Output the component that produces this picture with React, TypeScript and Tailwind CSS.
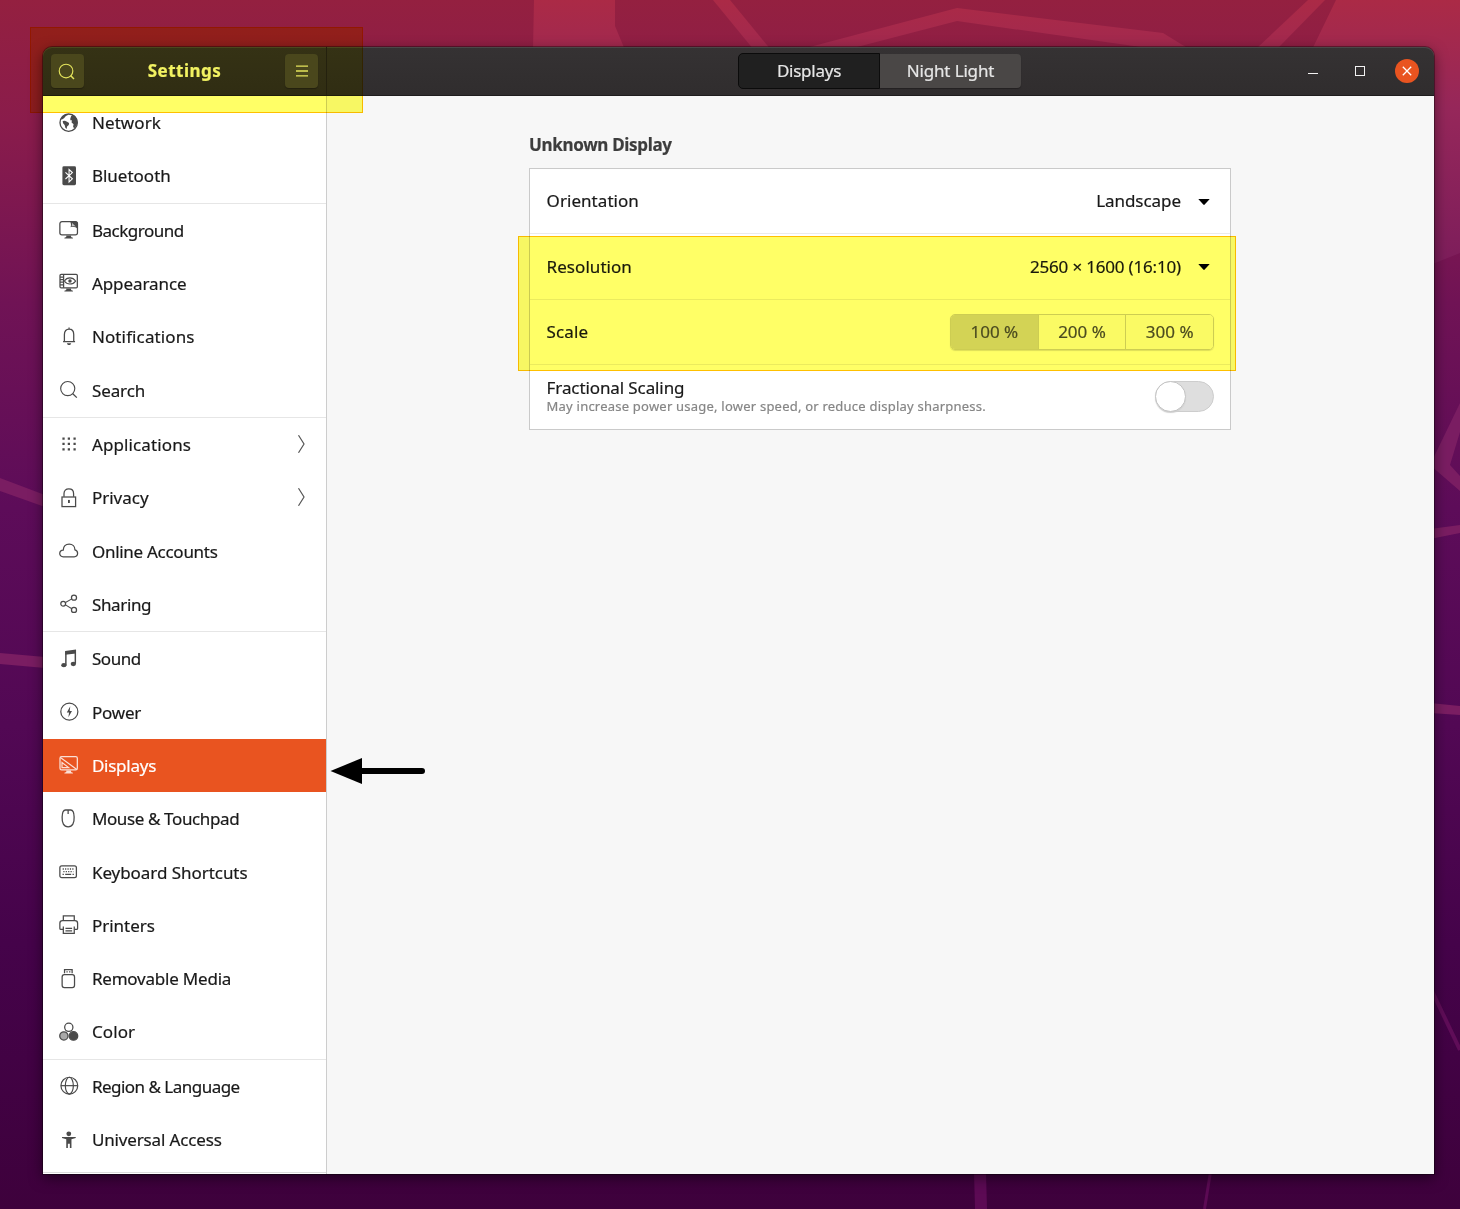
import type { ReactNode } from "react";

type Item = {
  label: string;
  icon: ReactNode;
  tracking: string;
  arrow?: boolean;
  selected?: boolean;
};

function Icon({ children }: { children: ReactNode }) {
  return (
    <svg
      viewBox="0 0 16 16"
      className="mb-[1px] h-[21.33px] w-[21.33px] shrink-0"
      fill="none"
      stroke="currentColor"
      strokeWidth="0.95"
    >
      {children}
    </svg>
  );
}

const stand = <path d="M6.2 12.4h3.6v1.1l1.4.6v.6H4.8v-.6l1.4-.6z" fill="currentColor" stroke="none" />;

const icons = {
  network: (
    <Icon>
      <circle cx="8" cy="8" r="6.5" strokeWidth="1" />
      <g fill="currentColor" stroke="none">
        <path d="M2.2 4.8C3.3 2.8 5.200 1.600 7.300 1.500l.6.600-2 .9-1.400 1.600-1.800 1.300z" />
        <path d="M3.500 6.700l1.700-.2 1.600.9 1.500.9-.2 1.500-1.300 1.100-.3 1.800-1-.8-.5-2.100-1.200-1.300z" />
        <path d="M9.200 5l.6-1.900 1.200-1.200c2.100 1 3.500 3.100 3.600 5.500-.1 2-1 3.700-2.500 4.900l-.8-1.500.4-1.700-1.500-1.300.2-1.600-1.100-.1z" />
      </g>
    </Icon>
  ),
  bluetooth: (
    <Icon>
      <rect x="3.3" y="1" width="10.2" height="14.2" rx="1.1" fill="currentColor" stroke="none" />
      <path d="M5.6 5.5l5.2 4.9-2.5 2.3V3.4l2.5 2.3-5.2 4.8" stroke="white" strokeWidth="0.8" />
    </Icon>
  ),
  background: (
    <Icon>
      <rect x="1.4" y="2" width="13.2" height="9.9" rx="1.6" />
      {stand}
      <path d="M9 1.600h4c1.100 0 2 .9 2 2v4.100C13.300 6 11.600 5.600 9.400 6.100 10 4.700 9.800 3.200 9 1.600z" fill="currentColor" stroke="none" />
      <path d="M10.200 5.300c.4-.9.400-1.700.2-2.500L13.300 5.700c-1-.4-2-.6-3.100-.4z" fill="white" fillOpacity="0.650" stroke="none" />
    </Icon>
  ),
  appearance: (
    <Icon>
      <rect x="1.5" y="1.7" width="13" height="10.2" rx="0.9" />
      <path d="M4.2 1.7v10.2M1.5 3.8h2.7M1.5 5.7h2.7M1.5 7.6h2.7M1.5 9.6h2.7" />
      {stand}
      <path d="M4.8 6.8C6.8 3.6 11 3.6 13.2 6.8 11 9.8 6.8 9.8 4.8 6.8z" strokeWidth="0.8" />
      <circle cx="9" cy="6.7" r="1.300" fill="currentColor" stroke="none" />
    </Icon>
  ),
  notifications: (
    <Icon>
      <path d="M3.8 11.8h9M4.8 11.6V6.3C4.8 3.9 6.2 2.3 8.3 2.3s3.5 1.6 3.5 4v5.3M8.3 1.2v1" />
      <path d="M6.7 12.9h3.2c-.3 1-.8 1.4-1.6 1.4s-1.4-.4-1.6-1.4z" fill="currentColor" stroke="none" />
    </Icon>
  ),
  search: (
    <Icon>
      <circle cx="7.3" cy="7.2" r="5.3" strokeWidth="0.85" />
      <path d="M11.1 11.1l3 2.9" />
    </Icon>
  ),
  applications: (
    <Icon>
      <path
        d="M3.3 4.2h1.7M7.3 4.2h1.7M11.6 4.2h1.7M3.3 8.2h1.7M7.3 8.2h1.7M11.6 8.2h1.7M3.3 12.2h1.7M7.3 12.2h1.7M11.6 12.2h1.7"
        strokeWidth="1.7"
      />
    </Icon>
  ),
  privacy: (
    <Icon>
      <rect x="3" y="7.5" width="10.2" height="7.2" />
      <path d="M4.5 7.3V5c0-2.3 1.4-3.6 3.6-3.6s3.6 1.3 3.6 3.6v2.3" />
      <path d="M7.5 9.7h1.4V12H7.5z" fill="currentColor" stroke="none" />
    </Icon>
  ),
  accounts: (
    <Icon>
      <path d="M3.9 12.6c-1.5 0-2.6-1.1-2.6-2.5s1.1-2.6 2.6-2.5C4.1 4.7 6 3.1 8.4 3.1c2.5 0 4.3 1.7 4.3 4.3 1.3.3 2 1.3 2 2.6 0 1.5-1.1 2.6-2.6 2.6z" />
    </Icon>
  ),
  sharing: (
    <Icon>
      <circle cx="3.9" cy="8" r="1.8" />
      <circle cx="12" cy="3.5" r="1.9" />
      <circle cx="12" cy="12.7" r="1.9" />
      <path d="M5.6 7.1l4.8-2.7M5.6 8.9l4.8 2.9" strokeWidth="0.8" />
    </Icon>
  ),
  sound: (
    <Icon>
      <path d="M5.4 2.2l8.1-1.1v3L5.4 5z" fill="currentColor" stroke="none" />
      <path d="M5.9 2.4v10.4M13 1.5v10.4" strokeWidth="1.1" />
      <ellipse cx="4.4" cy="12.9" rx="2" ry="1.6" fill="currentColor" stroke="none" />
      <ellipse cx="11.5" cy="12" rx="2" ry="1.6" fill="currentColor" stroke="none" />
    </Icon>
  ),
  power: (
    <Icon>
      <circle cx="8.5" cy="8" r="6.4" strokeWidth="0.9" />
      <path d="M9.2 4L6.6 8.600h1.700l-.5 3.600 2.700-4.700H8.800z" fill="currentColor" stroke="none" />
    </Icon>
  ),
  displays: (
    <Icon>
      <rect x="1.5" y="2" width="13" height="9.9" rx="1.2" />
      {stand}
      <path d="M1.8 2.6l12.3 9M3 6.4v3.8h5z" strokeWidth="0.9" />
    </Icon>
  ),
  mouse: (
    <Icon>
      <path d="M5.6 1.5h4c1.8 0 2.4 1.8 2.5 5.2.2 4.5-1.2 7.4-4.5 7.4S2.9 11.2 3.1 6.7C3.2 3.3 3.8 1.5 5.6 1.5zM7.6 1.5v3" />
    </Icon>
  ),
  keyboard: (
    <Icon>
      <rect x="1.4" y="3.6" width="12.4" height="8.8" rx="1.4" />
      <path d="M3.5 6h8.5" strokeDasharray="0.9 0.9" />
      <path d="M4 8h7.5" strokeDasharray="0.9 0.9" />
      <path d="M3.4 10h1M5.4 10h4.5M10.900 10h1" />
    </Icon>
  ),
  printers: (
    <Icon>
      <path d="M4 4.8V1.4h8.2v3.4M3.8 11.6H2.2c-.5 0-.8-.3-.8-.8V6.900c0-1.200.8-2 2-2h9.300c1.200 0 2 .8 2 2v3.900c0 .5-.3.800-.8.800h-1.500" />
      <path d="M4 9.4v5.2h8.2V9.4M5.6 10.7h5M5.6 12.7h5" />
    </Icon>
  ),
  removable: (
    <Icon>
      <rect x="3.1" y="5" width="9.3" height="9.7" rx="1.7" />
      <path d="M4.9 4V1.2h5.7V4M6.3 2.9h1M8.3 2.9h1" />
    </Icon>
  ),
  color: (
    <Icon>
      <circle cx="8.1" cy="4.7" r="3.1" />
      <circle cx="11.6" cy="11.2" r="3.2" fill="currentColor" />
      <circle cx="4.4" cy="11.2" r="3.1" fill="#a8a8a8" />
    </Icon>
  ),
  region: (
    <Icon>
      <circle cx="8.5" cy="8" r="6.3" strokeWidth="0.9" />
      <ellipse cx="8.5" cy="8" rx="3" ry="6.3" strokeWidth="0.9" />
      <path d="M2.2 8h12.6" strokeWidth="0.9" />
    </Icon>
  ),
  access: (
    <Icon>
      <g fill="currentColor" stroke="none">
        <circle cx="8.1" cy="3.6" r="1.8" />
        <path d="M3 6h10.300v.8l-3.200.9v6.600H8.900V11H7.400v3.300H6.200V7.700L3 6.800z" />
      </g>
    </Icon>
  ),
};

const groups: Item[][] = [
  [
    { label: "Network", icon: icons.network, tracking: "tracking-[0.1px]" },
    { label: "Bluetooth", icon: icons.bluetooth, tracking: "tracking-[0px]" },
  ],
  [
    { label: "Background", icon: icons.background, tracking: "tracking-[-0.5px]" },
    { label: "Appearance", icon: icons.appearance, tracking: "tracking-[-0.08px]" },
    { label: "Notifications", icon: icons.notifications, tracking: "tracking-[0.12px]" },
    { label: "Search", icon: icons.search, tracking: "tracking-[-0.1px]" },
  ],
  [
    { label: "Applications", icon: icons.applications, tracking: "tracking-[0.12px]", arrow: true },
    { label: "Privacy", icon: icons.privacy, tracking: "tracking-[0px]", arrow: true },
    { label: "Online Accounts", icon: icons.accounts, tracking: "tracking-[-0.28px]" },
    { label: "Sharing", icon: icons.sharing, tracking: "tracking-[-0.35px]" },
  ],
  [
    { label: "Sound", icon: icons.sound, tracking: "tracking-[-0.45px]" },
    { label: "Power", icon: icons.power, tracking: "tracking-[-0.2px]" },
    { label: "Displays", icon: icons.displays, tracking: "tracking-[-0.25px]", selected: true },
    { label: "Mouse & Touchpad", icon: icons.mouse, tracking: "tracking-[-0.38px]" },
    { label: "Keyboard Shortcuts", icon: icons.keyboard, tracking: "tracking-[-0.05px]" },
    { label: "Printers", icon: icons.printers, tracking: "tracking-[0px]" },
    { label: "Removable Media", icon: icons.removable, tracking: "tracking-[-0.21px]" },
    { label: "Color", icon: icons.color, tracking: "tracking-[0.1px]" },
  ],
  [
    { label: "Region & Language", icon: icons.region, tracking: "tracking-[-0.52px]" },
    { label: "Universal Access", icon: icons.access, tracking: "tracking-[-0.15px]" },
  ],
];

function Wallpaper() {
  return (
    <svg viewBox="0 0 1460 1209" className="absolute inset-0 h-full w-full">
      <defs>
        <linearGradient id="base" x1="0" y1="0" x2="0" y2="1">
          <stop offset="0" stopColor="#942040" />
          <stop offset="0.1" stopColor="#8a1c4b" />
          <stop offset="0.25" stopColor="#701355" />
          <stop offset="0.42" stopColor="#5d0c59" />
          <stop offset="0.6" stopColor="#520854" />
          <stop offset="0.78" stopColor="#45034a" />
          <stop offset="1" stopColor="#3e013c" />
        </linearGradient>
        <linearGradient id="light" gradientUnits="userSpaceOnUse" x1="0" y1="0" x2="0" y2="270">
          <stop offset="0" stopColor="#ab2a46" />
          <stop offset="0.4" stopColor="#96275a" />
          <stop offset="1" stopColor="#7c1d5b" />
        </linearGradient>
      </defs>
      <rect width="1460" height="1209" fill="url(#base)" />
      <g fill="url(#light)">
        <path d="M534 0h81v26l10 24h-92z" />
        <path d="M713 0h17l41 50h-17z" />
        <path d="M806 48L957 8l206 25 26 16h-34L957 21 853 48z" />
        <path d="M1308 0h17l-47 48h-21z" />
        <path d="M1336 0h124v253l-30 12V60h-123z" />
      </g>
      <g fill="#7a1d62">
        <path d="M0 478l45 17v12L0 491zM0 653l45 4v11L0 664z" />
        <path d="M1460 403l-30 62 30 26v-15l-10-11 10-33z" />
        <path d="M1430 529l30-4v8l-30 6zM1430 703l30 3v9l-30-2z" />
      </g>
      <path d="M1432 991l28 59" stroke="#5f0d58" strokeWidth="4" />
      <path d="M974 1172h12l1 37h-12z" fill="#5c0a54" />
      <path d="M1210.5 1172l-6 37" stroke="#5c0a54" strokeWidth="3" />
    </svg>
  );
}

function SidebarRow({ item }: { item: Item }) {
  return (
    <div
      className={
        item.selected
          ? "flex h-[53.33px] items-center bg-[#e95420] pr-[21px] pl-[14.6px] text-[#fbdfd5]"
          : "flex h-[53.33px] items-center pr-[21px] pl-[14.6px] text-[#4a4a4a]"
      }
    >
      {item.icon}
      <span
        className={
          (item.selected ? "text-white " : "text-[#191919] ") +
          "ml-[13px] flex-1 whitespace-nowrap " +
          item.tracking
        }
      >
        {item.label}
      </span>
      {item.arrow && (
        <svg viewBox="0 0 8 18" className="mb-[2px] h-[18px] w-2" fill="none" stroke="#555" strokeWidth="1.2">
          <path d="M1.5 0.3L7 9l-5.500 8.700" />
        </svg>
      )}
    </div>
  );
}

function Header() {
  return (
    <header className="flex h-[49px] shrink-0 rounded-t-[9px] border-b border-[#1f1d1e] bg-linear-to-b from-[#353233] to-[#302d2e] text-[#f2f2f2] shadow-[inset_0_1px_0_#4a4748]">
      <div className="flex w-[284px] items-center justify-between border-r border-[#242122] px-2">
        <button className="flex h-[34px] w-[33px] items-center justify-center rounded bg-[#4a4746] pr-[2px] text-[#e4e4e4] shadow-[0_1px_1px_#242122]">
          <svg viewBox="0 0 18 18" className="h-[17px] w-[17px]" fill="none" stroke="currentColor">
            <circle cx="8.5" cy="8.5" r="7.2" strokeWidth="1.2" />
            <path d="M13.3 13.3l3.6 3.6" strokeWidth="1.6" />
          </svg>
        </button>
        <h1 className="text-[17px] font-bold tracking-[0.5px]">Settings</h1>
        <button className="flex h-[34px] w-[33px] items-center justify-center rounded bg-[#4a4746] text-[#e4e4e4] shadow-[0_1px_1px_#242122]">
          <svg viewBox="0 0 12 12" className="h-3 w-3" stroke="currentColor" strokeWidth="1.3">
            <path d="M0 1.2h12M0 6h12M0 10.8h12" />
          </svg>
        </button>
      </div>
      <div className="flex flex-1 items-center pl-[411px]">
        <div className="flex h-[36px] text-[#e6e6e6]">
          <button className="w-[142px] rounded-l-[5px] border border-[#0b0b0b] bg-[#202020] tracking-[-0.25px]">
            Displays
          </button>
          <button className="my-px w-[141px] rounded-r bg-[#4a4746] tracking-[-0.15px] shadow-[0_1px_1px_#242122]">
            Night Light
          </button>
        </div>
        <div className="ml-auto flex items-center pr-[15px] text-[#f2f2f2]">
          <span className="mt-[5px] h-[1.5px] w-[10px] bg-current" />
          <span className="ml-[37px] h-[10px] w-[10px] border-[1.5px] border-current" />
          <button className="ml-[30px] flex h-6 w-6 items-center justify-center rounded-full bg-[#e95420]">
            <svg viewBox="0 0 10 10" className="h-[10px] w-[10px]" stroke="white" strokeWidth="1.3">
              <path d="M.8.8l8.4 8.4M9.2.8L.8 9.2" />
            </svg>
          </button>
        </div>
      </div>
    </header>
  );
}

function Caret() {
  return (
    <svg viewBox="0 0 12 6" className="mt-px mr-[4px] ml-[17px] h-[6px] w-3" fill="black">
      <path d="M.3 0h11.4L6.7 5.600q-.7.700-1.400 0z" />
    </svg>
  );
}

function DisplaySettings() {
  return (
    <section className="flex-1 bg-[#f7f7f7] pt-[36px] pl-[202px]">
      <h2 className="text-[17px] leading-[26px] font-bold tracking-[-0.33px] text-[#3d3d3d]">Unknown Display</h2>
      <div className="mt-[10px] flex h-[262px] w-[702px] flex-col border border-[#cacaca] bg-white">
        <div className="flex h-[65.25px] items-center justify-between border-b border-[#ebebeb] pr-4 pl-[16.6px]">
          <span className="tracking-[0.05px]">Orientation</span>
          <span className="flex items-center">
            <span className="tracking-[-0.05px]">Landscape</span>
            <Caret />
          </span>
        </div>
        <div className="flex h-[65.25px] items-center justify-between border-b border-[#ebebeb] pr-4 pl-[16.6px]">
          <span className="tracking-[0.05px]">Resolution</span>
          <span className="flex items-center">
            <span className="tracking-[-0.18px]">2560 × 1600 (16:10)</span>
            <Caret />
          </span>
        </div>
        <div className="flex h-[65.25px] items-center justify-between border-b border-[#ebebeb] pr-4 pl-[16.6px]">
          <span className="tracking-[0.1px]">Scale</span>
          <div className="flex h-[36px] w-[264px] divide-x divide-[#cdcdcd] overflow-hidden rounded-[5px] border border-[#cdcdcd] text-[#4b4b4b] shadow-[0_1px_1px_#dedede]">
            <button className="flex-1 bg-[#d3d3d3]">100 %</button>
            <button className="flex-1 bg-[#fafafa]">200 %</button>
            <button className="flex-1 bg-[#fafafa]">300 %</button>
          </div>
        </div>
        <div className="flex flex-1 items-center justify-between pr-4 pl-[16.6px]">
          <div className="mb-[2px]">
            <div className="leading-[20px] tracking-[-0.1px]">Fractional Scaling</div>
            <div className="text-[13px] leading-4 tracking-[0.22px] text-[#868686]">
              May increase power usage, lower speed, or reduce display sharpness.
            </div>
          </div>
          <div className="h-[31px] w-[59px] rounded-full border border-[#cdcdcd] bg-[#dedede]">
            <div className="-mt-px -ml-px h-[31px] w-[31px] rounded-full border border-[#c4c4c4] bg-white shadow-[0_1px_1px_#cfcfcf]" />
          </div>
        </div>
      </div>
    </section>
  );
}

export default function App() {
  return (
    <div className="relative flex h-[1209px] w-[1460px] overflow-hidden bg-[#5d0c59] pt-[47px] pl-[43px] font-['Noto_Sans','Open_Sans',sans-serif] text-[17px] text-[#191919] [-webkit-text-stroke:0.2px_currentColor]">
      <Wallpaper />
      <main className="relative flex h-[1127px] w-[1391px] flex-col rounded-t-[9px] shadow-[0_0_0_1px_rgba(0,0,0,0.35),0_4px_14px_rgba(0,0,0,0.5)]">
        <Header />
        <div className="flex min-h-0 flex-1">
          <nav className="w-[284px] shrink-0 overflow-hidden border-r border-[#cdcdcd] bg-white">
            {groups.map((group, index) => (
              <div key={group[0].label} className={index > 0 ? "border-t border-[#e6e6e6]" : ""}>
                {group.map((item) => (
                  <SidebarRow key={item.label} item={item} />
                ))}
              </div>
            ))}
            <div className="mt-[5px] h-px bg-[#dcdcdc]" />
          </nav>
          <DisplaySettings />
        </div>
      </main>

      <div className="absolute top-[27px] left-[30px] h-[86px] w-[333px] border border-[#ffc000] bg-[#ffff66] mix-blend-multiply" />
      <div className="absolute top-[236px] left-[518px] h-[135px] w-[718px] border border-[#ffc000] bg-[#ffff66] mix-blend-multiply" />
      <svg viewBox="0 0 96 28" className="absolute top-[757px] left-[330px] h-7 w-24">
        <path d="M0.5 14L32 1v26z" />
        <path d="M30 14h62" stroke="black" strokeWidth="6" strokeLinecap="round" />
      </svg>
    </div>
  );
}
